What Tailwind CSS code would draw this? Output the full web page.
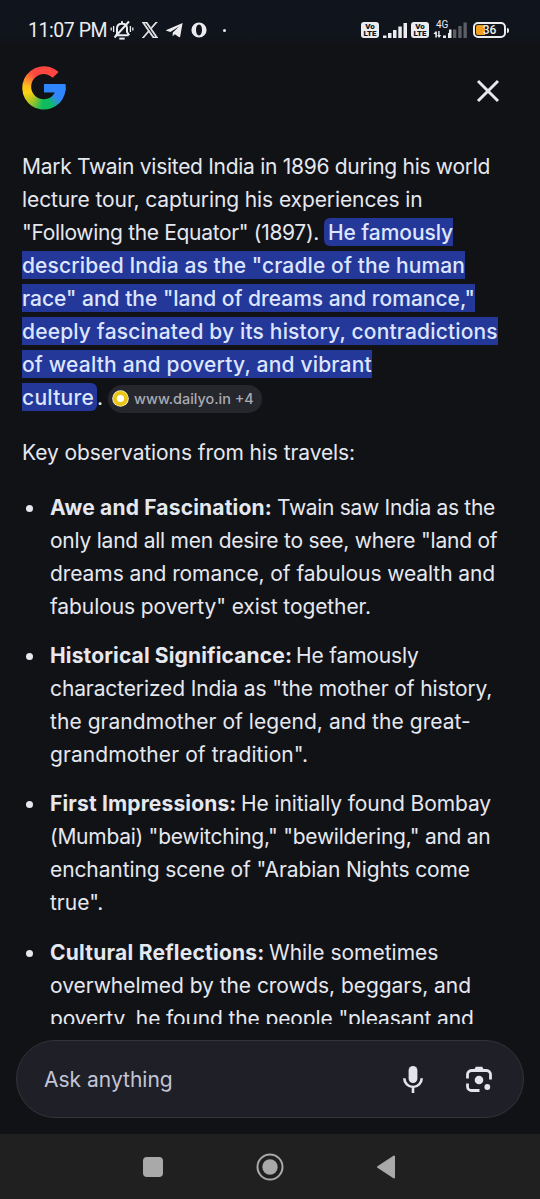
<!DOCTYPE html>
<html lang="en">
<head>
  <meta charset="UTF-8">
  <meta name="viewport" content="width=device-width, initial-scale=1.0">
  <title>Mark Twain in India</title>
  <script src="https://cdn.jsdelivr.net/npm/@tailwindcss/browser@4"></script>
</head>
<body class="bg-[#111216] w-[540px] h-[1199px] flex flex-col overflow-hidden font-['Inter',sans-serif] text-[#e6e8f0]">

  <!-- Status Bar -->
  <div class="h-12 shrink-0 bg-linear-to-b from-[#10141d] from-70% to-[#111216] flex justify-between pt-[18px] pl-7 pr-[31px] text-[#ececee]">
    <div class="flex h-6 items-center">
      <span class="w-[81px] mt-px font-['Roboto',sans-serif] text-[19.5px] leading-6 tracking-[-0.45px] whitespace-nowrap">11:07 PM</span>
      <!-- muted bell -->
      <svg class="w-6 h-5 ml-px" viewBox="0 0 24 20" fill="none" stroke="currentColor" stroke-width="2">
        <path d="M5.5 15.2h13M7 14.5V8.5C7 5.5 9 3.7 12 3.7s5 1.8 5 4.8v3.5l2.2 3.2M12 3.5V1.2" />
        <path d="M4.5 17.5L19 1.5" />
        <path d="M1.2 7.5v3M3.6 6v6M20.4 6v6M22.8 7.5v3" stroke-width="1.3" />
        <path d="M9.3 18.6h5.4" />
      </svg>
      <!-- X -->
      <svg class="w-4 h-4 ml-2" viewBox="0 0 24 24" fill="currentColor">
        <path d="M14.23 10.16L22.98 0h-2.07l-7.6 8.82L7.25 0H.25l9.18 13.34L.25 24h2.07l8.02-9.32L16.75 24h7zM11.4 13.46l-.93-1.33L3.07 1.56h3.18l5.97 8.53.93 1.33 7.75 11.1h-3.18z" stroke="currentColor" stroke-width="1.2" />
      </svg>
      <!-- Telegram -->
      <svg class="w-[17px] h-4 ml-2" viewBox="0 0 17 16" fill="currentColor">
        <path d="M16.6 1L.4 7.9c-.5.3-.4.7 0 .9l4 1.3L13 4.5 6.8 10.6l-.2 3.6 2.3-2 3.9 2.8c.6.4 1.2.2 1.4-.5z" />
      </svg>
      <!-- Opera -->
      <svg class="w-4 h-4 ml-2" viewBox="0 0 16 16" fill="currentColor" fill-rule="evenodd">
        <path d="M8 .5a7.6 7.5 0 1 0 0 15a7.6 7.5 0 1 0 0-15zM8 2.6c1.9 0 3 2.400 3 5.400s-1.100 5.400-3 5.400s-3-2.400-3-5.400s1.100-5.400 3-5.400z" />
      </svg>
      <span class="w-[3px] h-[3px] rounded-full bg-[#ececee] ml-4"></span>
    </div>

    <div class="flex h-6 items-center">
      <div class="w-[18px] h-4 rounded-[3px] bg-[#ececee] text-[#10141d] font-black text-[8px] leading-[7px] pt-px text-center font-['Roboto',sans-serif]">Vo<br>LTE</div>
      <svg class="w-6 h-4 ml-1" viewBox="0 0 24 16" fill="currentColor">
        <path d="M0 13.500h3.500V16H0zM5 11h3.500v5H5zM10 8h3.500v8H10zM15.300 4.500h3.500V16h-3.500zM20.500 1H24v15h-3.500z" />
      </svg>
      <div class="w-[18px] h-4 ml-1 rounded-[3px] bg-[#ececee] text-[#10141d] font-black text-[8px] leading-[7px] pt-px text-center font-['Roboto',sans-serif]">Vo<br>LTE</div>
      <div class="relative ml-1 w-[34px] h-6">
        <span class="absolute left-[3px] top-0.5 font-['Roboto',sans-serif] text-[10px] leading-[10px]">4G</span>
        <svg class="w-[34px] h-6" viewBox="0 0 34 24" fill="currentColor">
          <path d="M2.300 19.500V16H.3l2.700-3 .9 1v5.500zM5.200 13v4h-1L6 20l2.200-3H6.600v-4z" />
          <path d="M10 17.500h3V20h-3zM15 15h3v5h-3z" />
          <path d="M20 11.500h3.300V20H20zM25.300 8h3.300v12h-3.300zM30.500 4.500h3.300V20h-3.300z" fill="#5c5f66" />
          <path d="M16 11.500h2.500V20H16z" />
        </svg>
      </div>
      <!-- battery -->
      <div class="relative ml-[6px] w-[33px] h-4 rounded-[5px] border-2 border-[#ececee] p-px">
        <div class="w-[9px] h-full bg-[#f0a020] rounded-l-[2px]"></div>
        <span class="absolute inset-0 text-center font-['Roboto',sans-serif] font-medium text-[12px] leading-[13px]">36</span>
      </div>
      <span class="w-0.5 h-[5px] ml-px bg-[#ececee] rounded-r"></span>
    </div>
  </div>

  <!-- Header -->
  <header class="h-[102px] shrink-0 flex justify-between pt-[18px] pl-[22px] pr-10">
    <div class="w-11 h-11 pt-[18px] pl-[22px] bg-[conic-gradient(#ff4641_0deg,#ff4641_50deg,#3086ff_75deg,#3086ff_125deg,#0ebc5f_160deg,#0ebc5f_185deg,#a8c522_222deg,#ffd314_255deg,#ffc01a_275deg,#ff5a3c_315deg,#ff4641_330deg)] [clip-path:path('M43.300_18H22V26.300H33A12.600_12.600_0_1_1_30.700_11.800L36.600_5.900A21.700_21.700_0_1_0_43.300_18Z')]">
      <div class="h-[9px] bg-[#3086ff]"></div>
    </div>
    <svg class="w-6 h-6 mt-[13px]" viewBox="0 0 24 24" fill="none" stroke="#e6e8ea" stroke-width="3">
      <path d="M2 2l20 20M22 2L2 22" />
    </svg>
  </header>

  <!-- Answer -->
  <main class="h-[874px] shrink-0 overflow-hidden pl-[22px] text-[21px] leading-[33px] whitespace-nowrap">
    <div>
      <div class="tracking-[-0.29px]">Mark Twain visited India in 1896 during his world</div>
      <div class="tracking-[-0.1px]">lecture tour, capturing his experiences in</div>
      <div><span class="inline-block w-[302px] tracking-[-0.33px]">"Following the Equator" (1897).</span><span class="bg-[#24389a] text-[#dde5ff] font-medium pt-0.5 pb-px pl-1 rounded-l-md tracking-[-0.08px]">He famously</span></div>
      <div><span class="bg-[#24389a] text-[#dde5ff] font-medium pt-0.5 pb-px tracking-[0.12px]">described India as the "cradle of the human</span></div>
      <div><span class="bg-[#24389a] text-[#dde5ff] font-medium pt-0.5 pb-px">race" and the "land of dreams and romance,"</span></div>
      <div><span class="bg-[#24389a] text-[#dde5ff] font-medium pt-0.5 pb-px tracking-[0.16px]">deeply fascinated by its history, contradictions</span></div>
      <div><span class="bg-[#24389a] text-[#dde5ff] font-medium pt-0.5 pb-px tracking-[0.19px]">of wealth and poverty, and vibrant</span></div>
      <div class="flex items-center h-[33px]">
        <span class="leading-[25px] bg-[#24389a] text-[#dde5ff] font-medium pt-0.5 pb-px -mt-px pr-[3px] rounded-r-md tracking-[0.26px]">culture</span>
        <span class="w-[11px]">.</span>
        <span class="flex items-center w-[154px] h-7 mt-0.5 rounded-full bg-[#26272d] pl-1 text-[14.4px] font-medium text-[#a9abb3]">
          <svg class="w-[17px] h-[17px] mr-[5px]" viewBox="0 0 17 17">
            <circle cx="8.500" cy="8.500" r="8.300" fill="#f4efc8" />
            <circle cx="8.500" cy="8.500" r="7.500" fill="#e9c714" />
            <circle cx="8.500" cy="8.500" r="3.600" fill="#fff" />
          </svg>
          www.dailyo.in +4
        </span>
      </div>
    </div>

    <p class="mt-[22px] tracking-[-0.09px]">Key observations from his travels:</p>

    <ul class="mt-[22px] space-y-[16.2px]">
      <li class="flex">
        <span class="w-[7px] h-[7px] ml-1 mt-[14px] mr-[17px] rounded-full bg-[#e6e8f0]"></span>
        <div>
          <div><b class="inline-block w-[227px] tracking-[0.18px]">Awe and Fascination:</b><span class="tracking-[-0.3px]">Twain saw India as the</span></div>
          <div class="tracking-[-0.23px]">only land all men desire to see, where "land of</div>
          <div class="tracking-[-0.08px]">dreams and romance, of fabulous wealth and</div>
          <div class="tracking-[-0.09px]">fabulous poverty" exist together.</div>
        </div>
      </li>
      <li class="flex">
        <span class="w-[7px] h-[7px] ml-1 mt-[14px] mr-[17px] rounded-full bg-[#e6e8f0]"></span>
        <div>
          <div><b class="inline-block w-[246px] tracking-[0.14px]">Historical Significance:</b><span class="tracking-[-0.17px]">He famously</span></div>
          <div class="tracking-[-0.12px]">characterized India as "the mother of history,</div>
          <div class="tracking-[0.05px]">the grandmother of legend, and the great-</div>
          <div class="tracking-[0.08px]">grandmother of tradition".</div>
        </div>
      </li>
      <li class="flex">
        <span class="w-[7px] h-[7px] ml-1 mt-[14px] mr-[17px] rounded-full bg-[#e6e8f0]"></span>
        <div>
          <div><b class="inline-block w-[191px] tracking-[0.15px]">First Impressions:</b><span class="tracking-[-0.1px]">He initially found Bombay</span></div>
          <div class="tracking-[-0.26px]">(Mumbai) "bewitching," "bewildering," and an</div>
          <div class="tracking-[-0.1px]">enchanting scene of "Arabian Nights come</div>
          <div>true".</div>
        </div>
      </li>
      <li class="flex">
        <span class="w-[7px] h-[7px] ml-1 mt-[14px] mr-[17px] rounded-full bg-[#e6e8f0]"></span>
        <div>
          <div><b class="inline-block w-[219px] tracking-[0.24px]">Cultural Reflections:</b><span>While sometimes</span></div>
          <div class="tracking-[-0.05px]">overwhelmed by the crowds, beggars, and</div>
          <div class="tracking-[-0.13px]">poverty, he found the people "pleasant and</div>
        </div>
      </li>
    </ul>
  </main>

  <!-- Ask Bar -->
  <div class="h-[110px] shrink-0 pt-4 px-4">
    <div class="w-[508px] h-[78px] rounded-full bg-[#1f1f27] border border-[#33343a] flex items-center pl-[27px] pr-[31px]">
      <span class="grow pt-0.5 text-[21px] text-[#c2c5d6]">Ask anything</span>
      <!-- mic -->
      <svg class="w-5 h-[27px] mr-[43px]" viewBox="0 0 20 27">
        <rect x="5.600" y="0" width="8.800" height="17" rx="4.400" fill="#e3e4ee" />
        <path d="M1.300 12.300a8.700 8.700 0 0 0 17.400 0M10 21v6" fill="none" stroke="#e3e4ee" stroke-width="2.600" />
      </svg>
      <!-- lens -->
      <svg class="w-[26px] h-[26px]" viewBox="0 0 26 26">
        <path d="M1.500 12.500V8.500a4 4 0 0 1 4-4h15a4 4 0 0 1 4 4v5M1.500 17.500v3a4 4 0 0 0 4 4H13.500" fill="none" stroke="#e3e4ee" stroke-width="2.800" />
        <path d="M8 4l1.800-3.300h6.400L18 4z" fill="#e3e4ee" />
        <circle cx="13" cy="14" r="4.300" fill="#e3e4ee" />
        <circle cx="21.300" cy="21" r="2.900" fill="#e3e4ee" />
      </svg>
    </div>
  </div>

  <!-- Navigation Bar -->
  <nav class="h-[65px] shrink-0 bg-[#202020] flex items-center pl-[143px] text-[#a9a9a9]">
    <span class="w-5 h-5 rounded bg-[#a9a9a9]"></span>
    <svg class="w-7 h-7 ml-[92.5px]" viewBox="0 0 28 28" fill="currentColor">
      <circle cx="14" cy="14" r="12.500" fill="none" stroke="currentColor" stroke-width="2" />
      <circle cx="14" cy="14" r="7.700" />
    </svg>
    <svg class="w-5 h-6 ml-[92.5px]" viewBox="0 0 20 24" fill="currentColor" stroke="currentColor" stroke-width="2" stroke-linejoin="round">
      <path d="M2 12L18 1.500v21z" />
    </svg>
  </nav>

</body>
</html>
